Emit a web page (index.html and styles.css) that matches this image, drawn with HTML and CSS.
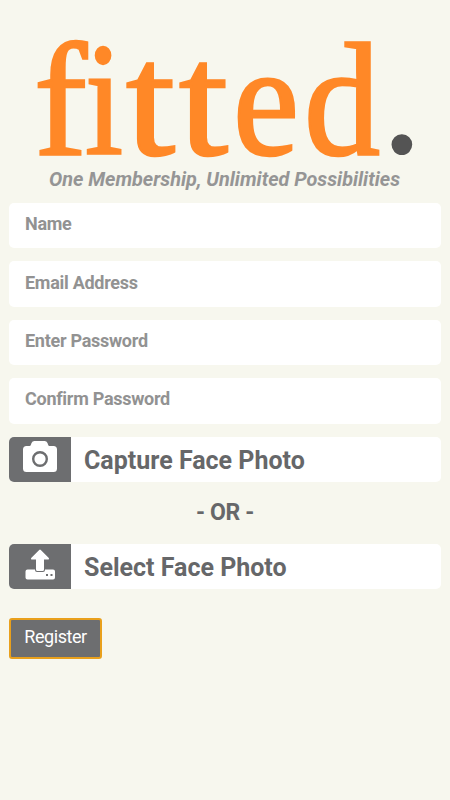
FILE: index.html
```html
<!DOCTYPE html>
<html lang="en">
<head>
  <meta charset="UTF-8">
  <meta name="viewport" content="width=device-width, initial-scale=1.0">
  <title>fitted. - Register</title>
  <link rel="stylesheet" href="styles.css">
</head>
<body>
  <header>
    <svg class="logo" width="450" height="165" viewBox="0 0 450 165">
      <text class="logo-text" y="154"><tspan x="34" textLength="53" lengthAdjust="spacingAndGlyphs">f</tspan><tspan x="85" textLength="38" lengthAdjust="spacingAndGlyphs">i</tspan><tspan x="126" textLength="49" lengthAdjust="spacingAndGlyphs">t</tspan><tspan x="179" textLength="49" lengthAdjust="spacingAndGlyphs">t</tspan><tspan x="233" textLength="66" lengthAdjust="spacingAndGlyphs">e</tspan><tspan x="304" textLength="76" lengthAdjust="spacingAndGlyphs">d</tspan></text>
      <text class="logo-dot" x="380" y="153">.</text>
    </svg>
    <p class="tagline"><svg width="450" height="30"><text x="49" y="21" textLength="351" lengthAdjust="spacingAndGlyphs">One Membership, Unlimited Possibilities</text></svg></p>
  </header>

  <form>
    <input type="text" name="name" placeholder="Name">
    <input type="email" name="email" placeholder="Email Address">
    <input type="password" name="password" placeholder="Enter Password">
    <input type="password" name="confirmPassword" placeholder="Confirm Password">

    <div class="photo">
      <span class="photo-icon">
        <svg width="62" height="45" viewBox="0 0 62 45">
          <path fill="#fff" d="M17.500 9h3q1 0 1.500-1.500l.5-1.500q.8-2 3-2h10q2.200 0 3 2l.5 1.500q.5 1.500 1.500 1.500h4q3.500 0 3.500 3.500v19q0 3.500-3.500 3.500h-27q-3.500 0-3.500-3.500v-19q0-3.500 3.500-3.500z"/>
          <circle cx="31" cy="22" r="6.800" fill="none" stroke="#6d6e70" stroke-width="2.400"/>
        </svg>
      </span>
      <span class="photo-label">Capture Face Photo</span>
    </div>

    <p class="or">- OR -</p>

    <div class="photo">
      <span class="photo-icon">
        <svg width="62" height="45" viewBox="0 0 62 45">
          <path fill="#fff" d="M18.500 25.500h7.500v.5q0 2 2 2h6q2 0 2-2v-.5h8q2 0 2 2v6q0 2-2 2h-25.500q-2 0-2-2v-6q0-2 2-2z"/>
          <path fill="#fff" d="M30.200 6q.8-.8 1.600 0l8 8q1 1.500-.8 1.500h-4v10q0 1.500-1.500 1.500h-5q-1.500 0-1.500-1.500v-10h-4q-1.800 0-.8-1.500z"/>
          <path fill="#6d6e70" d="M37 30h2v2h-2zM41.500 30h2v2h-2z"/>
        </svg>
      </span>
      <span class="photo-label">Select Face Photo</span>
    </div>

    <button type="button">Register</button>
  </form>
</body>
</html>
```
FILE: styles.css
```css
body {
  margin: 0;
  background-color: #f7f7ee;
  font-family: Roboto, sans-serif;
  color: #666769;
}

.logo {
  display: block;
  overflow: visible;
}

.logo-text {
  font-family: "Liberation Serif", serif;
  font-size: 160px;
  fill: #ff8827;
  stroke: #ff8827;
  stroke-width: 2.5px;
}

.logo-dot {
  font-family: "Liberation Serif", serif;
  font-size: 175px;
  fill: #545454;
}

.tagline {
  height: 30px;
  margin: 0;
  font-size: 20px;
  font-weight: bold;
  font-style: italic;
}

.tagline text {
  fill: #959595;
}

form {
  display: flex;
  flex-direction: column;
  gap: 13px;
  padding: 8px 9px;
}

input {
  height: 45.400px;
  padding: 0 16px 4px;
  box-sizing: border-box;
  border: none;
  border-radius: 5px;
  background-color: #fff;
  font: bold 18px Roboto, sans-serif;
  letter-spacing: -0.28px;
}

input::placeholder {
  color: #929292;
}

.photo {
  display: flex;
  height: 45.400px;
  overflow: hidden;
  border-radius: 5px;
  background-color: #fff;
}

.photo-icon {
  width: 62px;
  background-color: #6d6e70;
}

.photo-label {
  padding-left: 13px;
  font-size: 25px;
  font-weight: bold;
  line-height: 48px;
}

.or {
  margin: 0;
  font-size: 23px;
  font-weight: bold;
  line-height: 36px;
  letter-spacing: -0.4px;
  text-align: center;
}

button {
  align-self: flex-start;
  width: 93px;
  height: 41px;
  margin: 16px 0 0;
  padding: 0 0 4px;
  border: 2px solid #e9a01c;
  border-radius: 3px;
  background-color: #6d6e70;
  color: #fff;
  font: 18px Roboto, sans-serif;
  letter-spacing: -0.45px;
}
```
